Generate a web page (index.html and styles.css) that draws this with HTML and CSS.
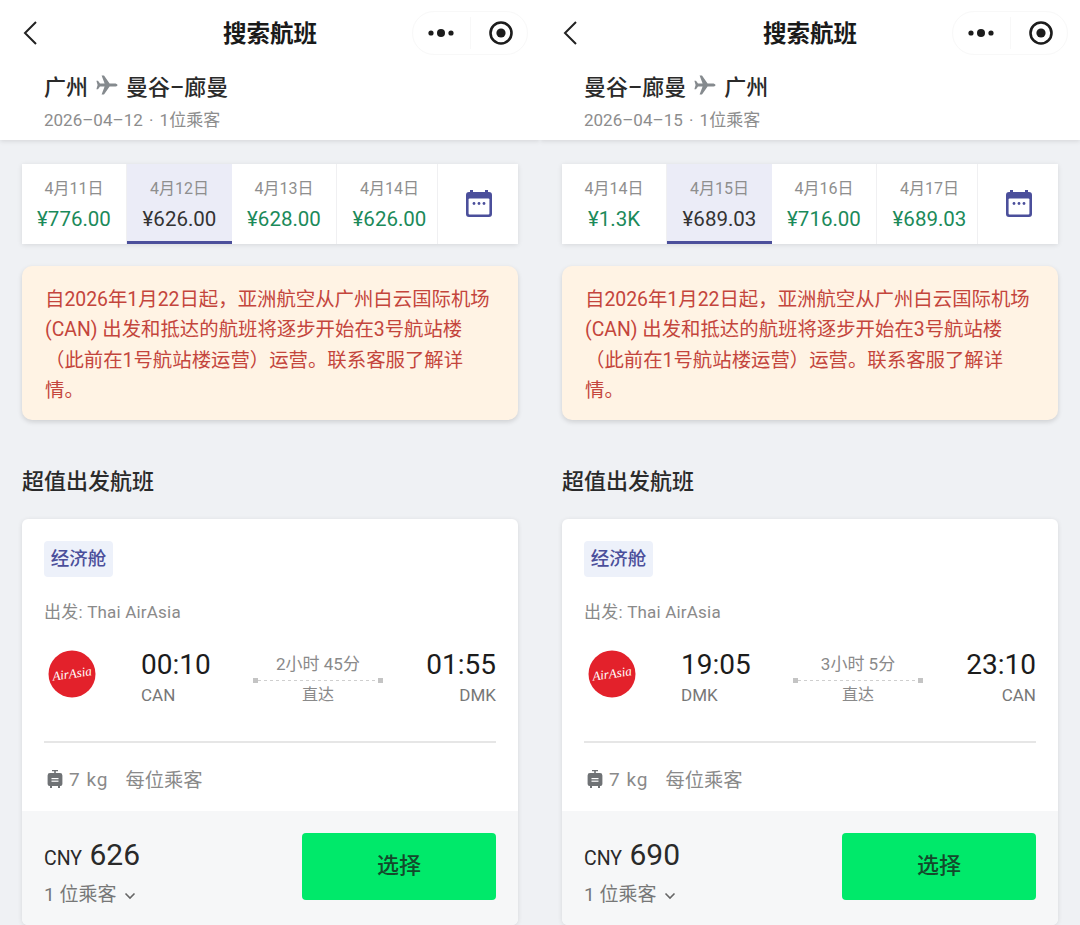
FILE: index.html
```html
<!DOCTYPE html>
<html lang="zh-CN">
<head>
    <meta charset="UTF-8">
    <meta name="viewport" content="width=device-width, initial-scale=1.0">
    <title>搜索航班</title>
    <link rel="stylesheet" href="styles.css">
</head>
<body>
    <div class="screens">
        <!-- 去程 -->
        <section class="screen">
            <header class="head">
                <div class="topbar">
                    <svg class="back" width="16" height="26" viewBox="0 0 16 26"><path d="M14 2 L3 13 L14 24" fill="none" stroke="#222" stroke-width="2"/></svg>
                    <h1 class="title">搜索航班</h1>
                    <div class="capsule">
                        <span class="capsule-btn"><svg width="28" height="10" viewBox="0 0 28 10"><circle cx="4" cy="5" r="2.6" fill="#1c1c1c"/><circle cx="14" cy="5" r="4" fill="#1c1c1c"/><circle cx="24" cy="5" r="2.6" fill="#1c1c1c"/></svg></span>
                        <span class="capsule-btn capsule-right"><svg width="26" height="26" viewBox="0 0 26 26"><circle cx="13" cy="13" r="10.5" fill="none" stroke="#1c1c1c" stroke-width="2.6"/><circle cx="13" cy="13" r="4.6" fill="#1c1c1c"/></svg></span>
                    </div>
                </div>
                <div class="route">
                    <span>广州</span>
                    <svg class="plane" width="22" height="20" viewBox="0 0 22 20"><path d="M21.5 10 C21.5 9 20 8.4 18.5 8.4 H13.6 L8 0.5 H5.6 L8.6 8.4 H4 L2 5.8 H0.4 L1.6 10 L0.4 14.2 H2 L4 11.6 H8.6 L5.6 19.5 H8 L13.6 11.6 H18.5 C20 11.6 21.5 11 21.5 10 Z" fill="#858a8e"/></svg>
                    <span>曼谷–廊曼</span>
                </div>
                <p class="route-sub">2026–04–12 · 1位乘客</p>
            </header>

            <div class="dates">
                <div class="date"><span class="day">4月11日</span><span class="fare">¥776.00</span></div>
                <div class="date on"><span class="day">4月12日</span><span class="fare">¥626.00</span></div>
                <div class="date"><span class="day">4月13日</span><span class="fare">¥628.00</span></div>
                <div class="date date-last"><span class="day">4月14日</span><span class="fare">¥626.00</span></div>
                <div class="date date-cal">
                    <svg width="28" height="30" viewBox="0 0 28 30"><path d="M5 3 V1 H8 V3 H20 V1 H23 V3 H24 A3 3 0 0 1 27 6 V25 A3 3 0 0 1 24 28 H4 A3 3 0 0 1 1 25 V6 A3 3 0 0 1 4 3 Z" fill="#4b4f9b"/><rect x="3.6" y="9.5" width="20.8" height="16" rx="1" fill="#fff"/><circle cx="9" cy="14.5" r="1.4" fill="#4b4f9b"/><circle cx="14" cy="14.5" r="1.4" fill="#4b4f9b"/><circle cx="19" cy="14.5" r="1.4" fill="#4b4f9b"/></svg>
                </div>
            </div>

            <div class="notice">自2026年1月22日起，亚洲航空从广州白云国际机场<br>(CAN) 出发和抵达的航班将逐步开始在3号航站楼<br>（此前在1号航站楼运营）运营。联系客服了解详<br>情。</div>

            <h2 class="section">超值出发航班</h2>

            <div class="card">
                <div class="card-body">
                    <span class="tag">经济舱</span>
                    <p class="carrier">出发: Thai AirAsia</p>
                    <div class="flight">
                        <svg class="logo" width="48" height="48" viewBox="0 0 48 48"><circle cx="24" cy="24" r="23.5" fill="#e3212b"/><text class="logo-text" x="24" y="28" text-anchor="middle" transform="rotate(-8 24 24)">AirAsia</text></svg>
                        <div class="stop"><strong>00:10</strong><span>CAN</span></div>
                        <div class="leg"><span class="leg-time">2小时 45分</span><i class="leg-line"></i><span>直达</span></div>
                        <div class="stop stop-end"><strong>01:55</strong><span>DMK</span></div>
                    </div>
                    <div class="bag">
                        <svg width="16" height="20" viewBox="0 0 16 20"><path d="M5 1 H11 V2.2 H8.8 V4 H13 A2.4 2.4 0 0 1 15.4 6.4 V15 A2 2 0 0 1 13.4 17 H13 V19 H11 V17 H5 V19 H3 V17 H2.6 A2 2 0 0 1 0.6 15 V6.4 A2.4 2.4 0 0 1 3 4 H7.2 V2.2 H5 Z" fill="#6f7275"/><rect x="4.5" y="9" width="7" height="1.2" fill="#fff"/><rect x="4.5" y="11.6" width="7" height="1.2" fill="#fff"/></svg>
                        <span class="bag-kg">7 kg</span>
                        <span>每位乘客</span>
                    </div>
                </div>
                <div class="card-foot">
                    <div>
                        <p class="price"><small>CNY</small> 626</p>
                        <p class="pax">1 位乘客 <svg width="12" height="8" viewBox="0 0 12 8"><path d="M1.5 1.5 L6 6 L10.5 1.5" fill="none" stroke="#666" stroke-width="1.6"/></svg></p>
                    </div>
                    <button class="pick">选择</button>
                </div>
            </div>
        </section>

        <!-- 回程 -->
        <section class="screen">
            <header class="head">
                <div class="topbar">
                    <svg class="back" width="16" height="26" viewBox="0 0 16 26"><path d="M14 2 L3 13 L14 24" fill="none" stroke="#222" stroke-width="2"/></svg>
                    <h1 class="title">搜索航班</h1>
                    <div class="capsule">
                        <span class="capsule-btn"><svg width="28" height="10" viewBox="0 0 28 10"><circle cx="4" cy="5" r="2.6" fill="#1c1c1c"/><circle cx="14" cy="5" r="4" fill="#1c1c1c"/><circle cx="24" cy="5" r="2.6" fill="#1c1c1c"/></svg></span>
                        <span class="capsule-btn capsule-right"><svg width="26" height="26" viewBox="0 0 26 26"><circle cx="13" cy="13" r="10.5" fill="none" stroke="#1c1c1c" stroke-width="2.6"/><circle cx="13" cy="13" r="4.6" fill="#1c1c1c"/></svg></span>
                    </div>
                </div>
                <div class="route">
                    <span>曼谷–廊曼</span>
                    <svg class="plane" width="22" height="20" viewBox="0 0 22 20"><path d="M21.5 10 C21.5 9 20 8.4 18.5 8.4 H13.6 L8 0.5 H5.6 L8.6 8.4 H4 L2 5.8 H0.4 L1.6 10 L0.4 14.2 H2 L4 11.6 H8.6 L5.6 19.5 H8 L13.6 11.6 H18.5 C20 11.6 21.5 11 21.5 10 Z" fill="#858a8e"/></svg>
                    <span>广州</span>
                </div>
                <p class="route-sub">2026–04–15 · 1位乘客</p>
            </header>

            <div class="dates">
                <div class="date"><span class="day">4月14日</span><span class="fare">¥1.3K</span></div>
                <div class="date on"><span class="day">4月15日</span><span class="fare">¥689.03</span></div>
                <div class="date"><span class="day">4月16日</span><span class="fare">¥716.00</span></div>
                <div class="date date-last"><span class="day">4月17日</span><span class="fare">¥689.03</span></div>
                <div class="date date-cal">
                    <svg width="28" height="30" viewBox="0 0 28 30"><path d="M5 3 V1 H8 V3 H20 V1 H23 V3 H24 A3 3 0 0 1 27 6 V25 A3 3 0 0 1 24 28 H4 A3 3 0 0 1 1 25 V6 A3 3 0 0 1 4 3 Z" fill="#4b4f9b"/><rect x="3.6" y="9.5" width="20.8" height="16" rx="1" fill="#fff"/><circle cx="9" cy="14.5" r="1.4" fill="#4b4f9b"/><circle cx="14" cy="14.5" r="1.4" fill="#4b4f9b"/><circle cx="19" cy="14.5" r="1.4" fill="#4b4f9b"/></svg>
                </div>
            </div>

            <div class="notice">自2026年1月22日起，亚洲航空从广州白云国际机场<br>(CAN) 出发和抵达的航班将逐步开始在3号航站楼<br>（此前在1号航站楼运营）运营。联系客服了解详<br>情。</div>

            <h2 class="section">超值出发航班</h2>

            <div class="card">
                <div class="card-body">
                    <span class="tag">经济舱</span>
                    <p class="carrier">出发: Thai AirAsia</p>
                    <div class="flight">
                        <svg class="logo" width="48" height="48" viewBox="0 0 48 48"><circle cx="24" cy="24" r="23.5" fill="#e3212b"/><text class="logo-text" x="24" y="28" text-anchor="middle" transform="rotate(-8 24 24)">AirAsia</text></svg>
                        <div class="stop"><strong>19:05</strong><span>DMK</span></div>
                        <div class="leg"><span class="leg-time">3小时 5分</span><i class="leg-line"></i><span>直达</span></div>
                        <div class="stop stop-end"><strong>23:10</strong><span>CAN</span></div>
                    </div>
                    <div class="bag">
                        <svg width="16" height="20" viewBox="0 0 16 20"><path d="M5 1 H11 V2.2 H8.8 V4 H13 A2.4 2.4 0 0 1 15.4 6.4 V15 A2 2 0 0 1 13.4 17 H13 V19 H11 V17 H5 V19 H3 V17 H2.6 A2 2 0 0 1 0.6 15 V6.4 A2.4 2.4 0 0 1 3 4 H7.2 V2.2 H5 Z" fill="#6f7275"/><rect x="4.5" y="9" width="7" height="1.2" fill="#fff"/><rect x="4.5" y="11.6" width="7" height="1.2" fill="#fff"/></svg>
                        <span class="bag-kg">7 kg</span>
                        <span>每位乘客</span>
                    </div>
                </div>
                <div class="card-foot">
                    <div>
                        <p class="price"><small>CNY</small> 690</p>
                        <p class="pax">1 位乘客 <svg width="12" height="8" viewBox="0 0 12 8"><path d="M1.5 1.5 L6 6 L10.5 1.5" fill="none" stroke="#666" stroke-width="1.6"/></svg></p>
                    </div>
                    <button class="pick">选择</button>
                </div>
            </div>
        </section>
    </div>
</body>
</html>
```

FILE: styles.css
```css
* { margin:0; padding:0; box-sizing:border-box;}
html, body { height:925px; overflow:hidden;}
body { background-color:#eff1f4; color:#1f1f1f; font-family:Roboto, "Noto Sans CJK SC", sans-serif;}

.screens { display:flex; height:925px;}
.screen { width:540px; height:925px; overflow:hidden; display:flex; flex-direction:column;}

/* top */
.head { height:140px; background-color:#fff; box-shadow:0 1px 5px rgba(0,0,0,.12); flex:none;}
.topbar { height:66px; display:grid; grid-template-columns:130px 1fr 130px; align-items:center;}
.back { margin-left:22px;}
.title { font-size:23.5px; font-weight:700; text-align:center; color:#1a1a1a; padding-bottom:2px;}
.capsule { justify-self:end; margin-right:12px; width:116px; height:44px; border:1px solid #f8f8f8; border-radius:22px; display:flex; align-items:center;}
.capsule-btn { width:58px; display:flex; justify-content:center; align-items:center;}
.capsule-right { border-left:1px solid #f8f8f8; height:32px; padding-left:4px;}

.route { height:38px; padding-left:44px; display:flex; align-items:center; gap:8px; font-size:22px; font-weight:500; color:#2a2a2a;}
.route-sub { margin-top:4px; padding-left:44px; font-size:17px; color:#8d8d8d; line-height:24px; word-spacing:2px;}

/* dates */
.dates { flex:none; margin:24px 22px 0; height:80px; background-color:#fff; display:grid; grid-template-columns:105px 105px 105px 101px 80px; box-shadow:0 1px 5px rgba(0,0,0,.1);}
.date { padding-top:3px; display:flex; flex-direction:column; align-items:center; justify-content:center; gap:5px; border-right:1px solid #f0f0f2;}
.date.on { background-color:#ebecf7; border-bottom:3px solid #4b4f9b; padding-top:6px; border-right:0;}
.date-last { padding-left:5px;}
.date-cal { border-right:0; padding:0 0 1px 2px;}
.day { font-size:16px; line-height:22px; color:#8e8e8e;}
.fare { font-size:20.5px; line-height:28px; color:#1b8a5a;}
.date.on .fare { color:#333;}

/* notice */
.notice { flex:none; margin:22px 22px 0; height:154px; padding:19px 23px; background-color:#fff3e4; border-radius:10px; box-shadow:0 2px 5px rgba(0,0,0,.14); font-size:19.4px; line-height:30.3px; color:#c4453c; white-space:nowrap;}

.section { flex:none; margin:45px 22px 0; font-size:22px; line-height:34px; font-weight:500; color:#2a2a2a;}

/* card */
.card { flex:none; margin:20px 22px 0; background-color:#fff; border-radius:6px; box-shadow:0 1px 5px rgba(0,0,0,.1); overflow:hidden;}
.card-body { height:292px; padding:22px 22px 0;}
.tag { display:block; width:69px; height:36px; background-color:#edf1fa; border-radius:4px; text-align:center; font-size:18.5px; line-height:36px; font-weight:500; color:#4b4f9b;}
.carrier { margin-top:24px; font-size:17px; line-height:22px; color:#8a8a8a; letter-spacing:.2px;}

.flight { margin-top:16px; height:78px; display:flex; align-items:flex-start;}
.logo { flex:none; margin:11px 45px 0 4px;}
.logo-text { font-family:"Liberation Serif", serif; font-style:italic; font-size:13px; fill:#fff;}
.stop { width:80px; padding-top:9px; display:flex; flex-direction:column;}
.stop strong { font-size:28px; line-height:34px; font-weight:400; color:#1c1c1c;}
.stop span { font-size:17px; line-height:26px; color:#777;}
.stop-end { text-align:right; margin-left:auto;}
.leg { width:130px; margin:14px 0 0 32px; display:flex; flex-direction:column; align-items:center; font-size:16px; line-height:22px; color:#8a8a8a;}
.leg-line { display:block; width:100%; height:5px; border-left:5px solid #c4c4c4; border-right:5px solid #c4c4c4; background:repeating-linear-gradient(90deg,#cfcfcf 0,#cfcfcf 3px,transparent 3px,transparent 6px) center/100% 1px no-repeat; margin:3px 0 1px;}
.leg-time { font-size:17px;}

.bag { margin-top:24px; padding-top:18px; border-top:2px solid #e6e6e6; height:56px; display:flex; align-items:center; font-size:19.3px; color:#8a8a8a;}
.bag svg { margin-left:3px;}
.bag-kg { margin:0 17px 0 6px; font-size:19px; letter-spacing:1px;}

.card-foot { height:114px; padding:22px 22px 0; background-color:#f6f7f8; display:flex; justify-content:space-between; align-items:flex-start;}
.price { margin-top:2px; font-size:30px; line-height:40px; color:#2a2a2a;}
.price small { font-size:19.5px;}
.pax { margin-top:3px; font-size:19px; line-height:26px; color:#777;}
.pax svg { margin-left:3px; vertical-align:1px;}
.pick { width:194px; height:67px; padding-bottom:8px; border:0; border-radius:4px; background-color:#00e96a; font-family:inherit; font-size:22px; font-weight:500; color:#14492c;}
```
